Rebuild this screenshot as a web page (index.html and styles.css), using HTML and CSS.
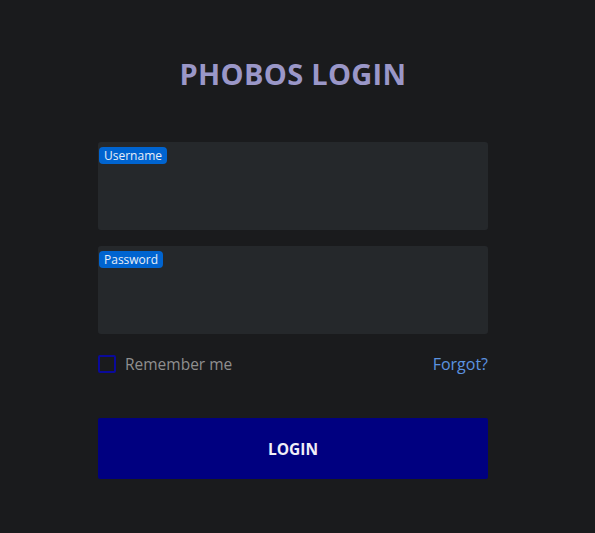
FILE: index.html
```html
<!DOCTYPE html>
<html>
<head>
<meta charset="utf-8">
<link rel="stylesheet" href="styles.css">
</head>
<body>
<main class="login">
  <h1 class="title">PHOBOS LOGIN</h1>
  <form class="form">
    <div class="field">
      <span class="badge">Username</span>
    </div>
    <div class="field">
      <span class="badge">Password</span>
    </div>
    <div class="row">
      <label class="remember"><span class="box"></span>Remember me</label>
      <a class="forgot">Forgot?</a>
    </div>
    <button type="button" class="btn">LOGIN</button>
  </form>
</main>
</body>
</html>
```
FILE: styles.css
```css
html, body {
  margin: 0;
  padding: 0;
  background: #1a1b1d;
  height: 100%;
}
body {
  font-family: "Open Sans", "Noto Sans", sans-serif;
  padding-right: 9px;
  box-sizing: border-box;
}
.login {
  width: 390px;
  margin: 0 auto;
  padding-top: 55px;
}
.title {
  margin: 0 0 50px;
  text-align: center;
  color: #9a97c8;
  font-size: 29px;
  font-weight: 700;
  line-height: 37px;
  letter-spacing: 0.3px;
}
.form {
  display: flex;
  flex-direction: column;
}
.field {
  display: flex;
  align-items: flex-start;
  height: 88px;
  background: #25282b;
  border-radius: 3px;
  margin-bottom: 16px;
  padding: 5px 1px;
  box-sizing: border-box;
}
.badge {
  display: block;
  background: #0064d0;
  color: #e8eef8;
  font-size: 12px;
  line-height: 17px;
  padding: 0 5px;
  border-radius: 4px;
}
.row {
  display: flex;
  justify-content: space-between;
  align-items: center;
  margin-top: 2px;
  height: 24px;
}
.remember {
  display: flex;
  align-items: center;
  color: #8f8f8f;
  font-size: 15.5px;
}
.box {
  width: 14px;
  height: 14px;
  border: 2px solid #0a0a9a;
  border-radius: 2px;
  margin-right: 9px;
}
.forgot {
  color: #5c93e0;
  font-size: 16px;
}
.btn {
  margin-top: 42px;
  height: 61px;
  border: none;
  border-radius: 2px;
  background: #000080;
  color: #f0eef8;
  font-family: inherit;
  font-weight: 700;
  font-size: 15.5px;
}
```
